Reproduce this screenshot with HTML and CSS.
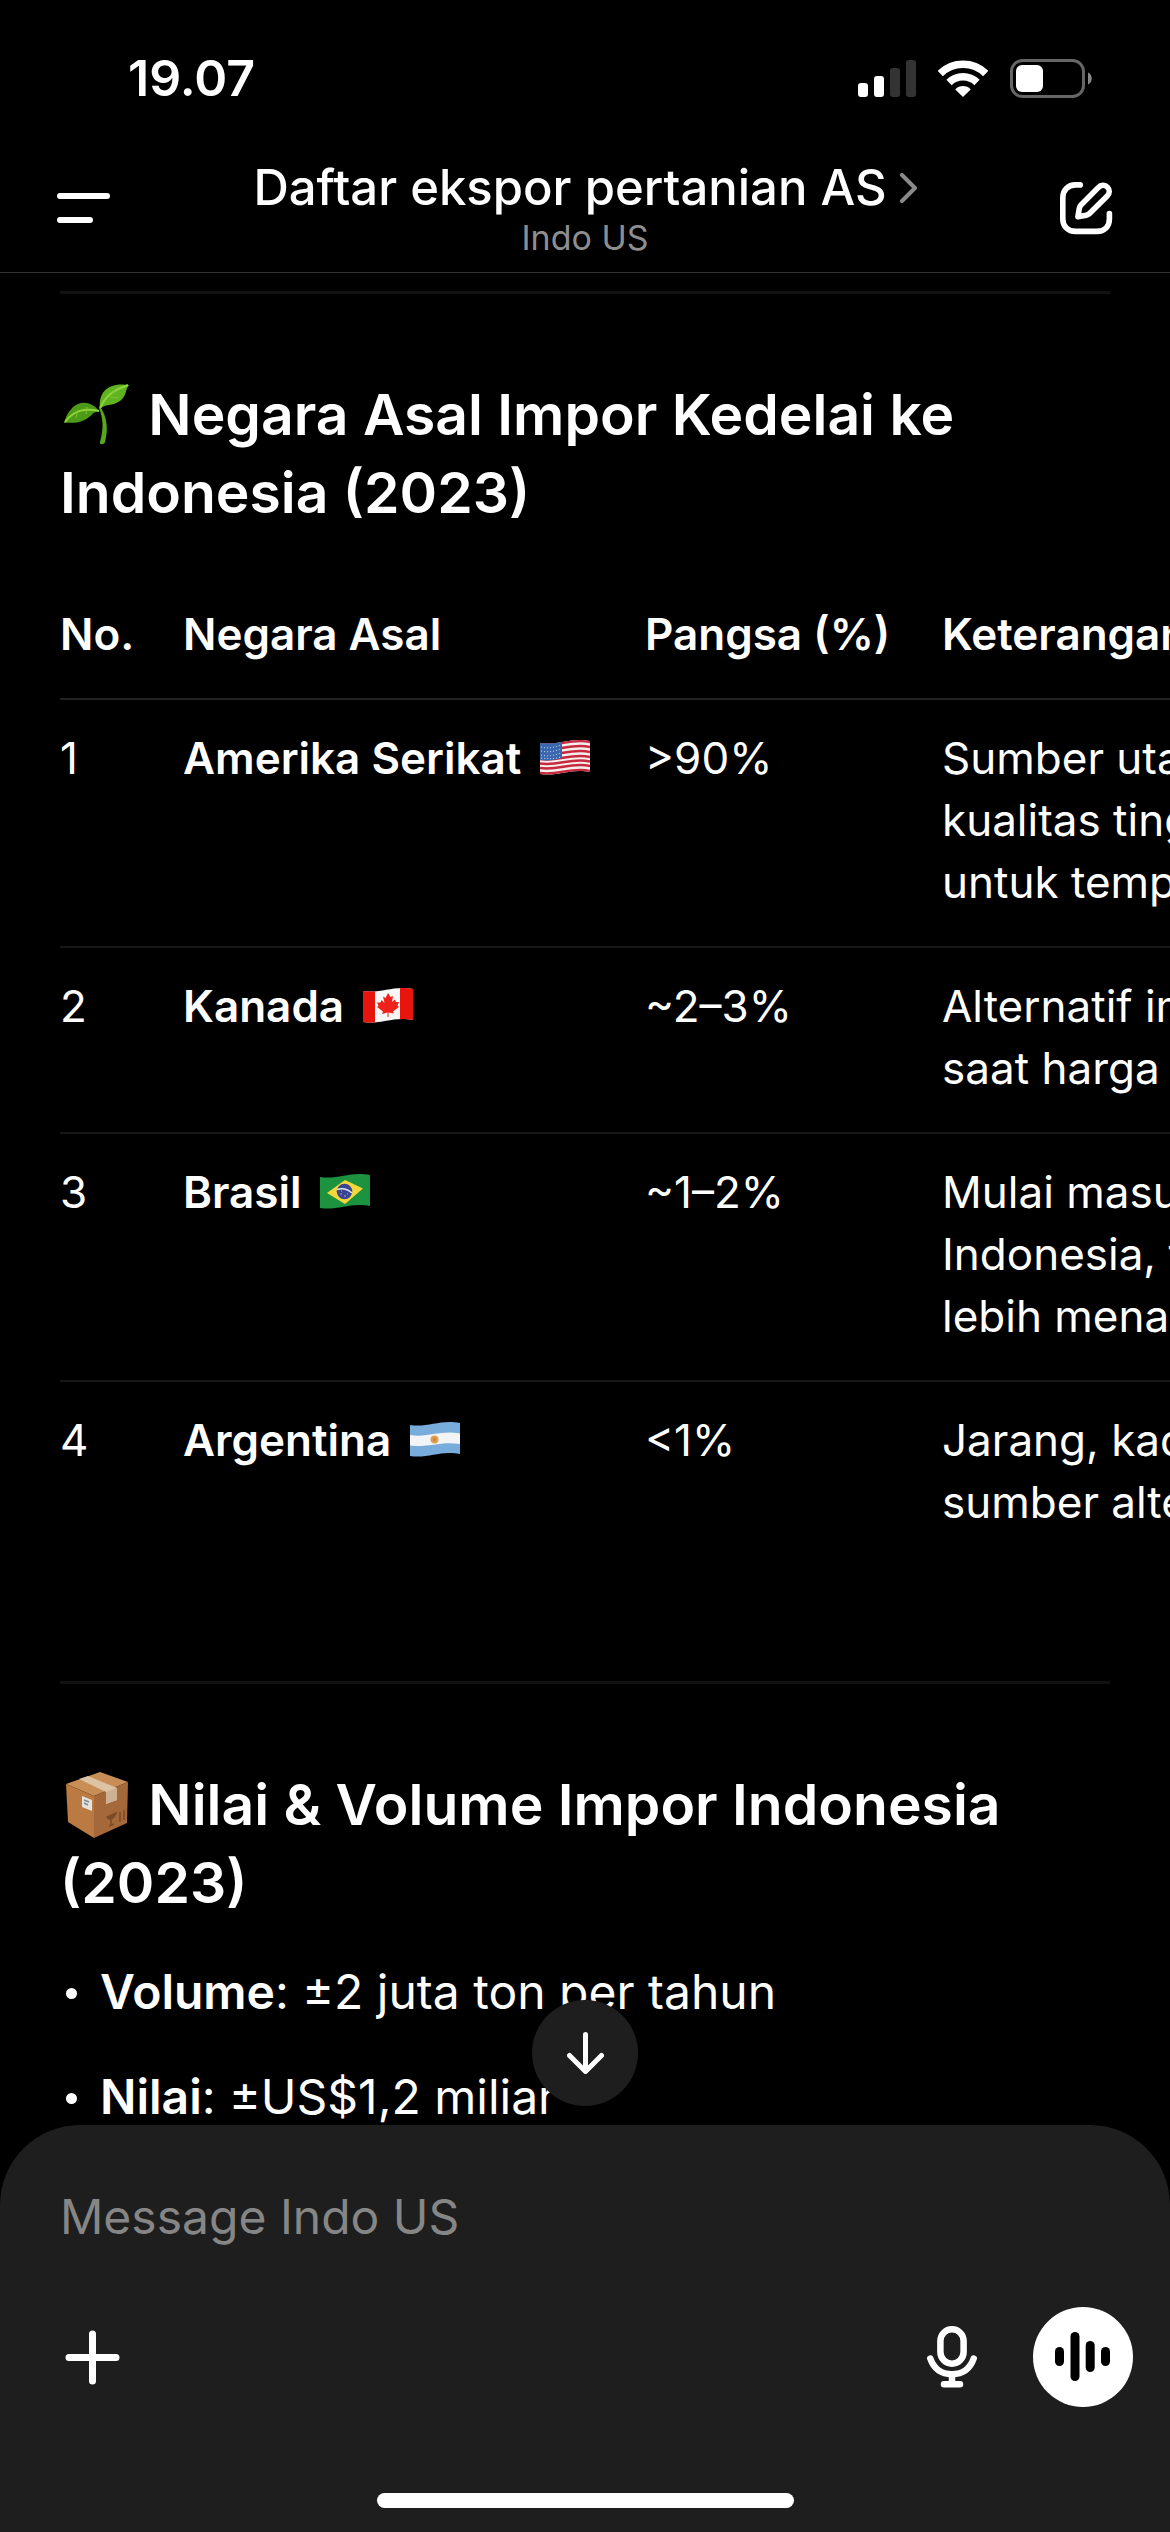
FILE: index.html
```html
<!DOCTYPE html>
<html lang="id">
<head>
  <meta charset="UTF-8">
  <meta name="viewport" content="width=device-width, initial-scale=1.0">
  <title>Daftar ekspor pertanian AS</title>
  <link rel="stylesheet" href="styles.css">
</head>
<body>
  <!-- Header -->
  <header class="header">
    <div class="status-bar">
      <span class="time">19.07</span>
      <div class="status-icons">
        <svg width="58" height="37" viewBox="0 0 58 37" fill="#fff">
          <rect x="0" y="23" width="10" height="14" rx="3"/>
          <rect x="16" y="16" width="10" height="21" rx="3"/>
          <rect x="32" y="8" width="10" height="29" rx="3" fill="#333"/>
          <rect x="48" y="0" width="10" height="37" rx="3" fill="#333"/>
        </svg>
        <svg width="50" height="37" viewBox="0 0 50 37" fill="none" stroke="#fff" stroke-width="7.6">
          <path d="M2.2 13.6A32.5 32.5 0 0 1 47.8 13.6"/>
          <path d="M11 22.5A20 20 0 0 1 39 22.5"/>
          <path d="M25 37L17.3 29.4C21.5 25 28.5 25 32.7 29.4Z" fill="#fff" stroke="none"/>
        </svg>
        <svg width="82" height="39" viewBox="0 0 82 39">
          <rect x="1.5" y="1.5" width="72" height="36" rx="11" fill="none" stroke="#666" stroke-width="3"/>
          <rect x="6" y="6" width="27" height="27" rx="6" fill="#fff"/>
          <path d="M78 13.5C83 15.5 83 23.5 78 25.5Z" fill="#888"/>
        </svg>
      </div>
    </div>

    <div class="nav">
      <button class="icon-btn" type="button" aria-label="Menu">
        <svg width="53" height="32" viewBox="0 0 53 32" stroke="#fff" stroke-width="6" stroke-linecap="round">
          <path d="M3 4H50M3 28H33"/>
        </svg>
      </button>
      <div class="nav-title">
        <h1>
          <a href="#">Daftar ekspor pertanian AS
            <svg width="18" height="30" viewBox="0 0 18 30" fill="none" stroke="#8a8a8a" stroke-width="4" stroke-linecap="round" stroke-linejoin="round">
              <path d="M3 2L16 15L3 28"/>
            </svg>
          </a>
        </h1>
        <p>Indo US</p>
      </div>
      <button class="icon-btn" type="button" aria-label="New chat">
        <svg width="53" height="53" viewBox="0 0 53 53" fill="none" stroke="#fff" stroke-width="5.6" stroke-linecap="round" stroke-linejoin="round">
          <path d="M20.2 2.9H15.5C8 2.9 2.8 8 2.8 15.5V37C2.8 44.5 8 49.4 15.5 49.4H37C44.5 49.4 49.4 44.5 49.4 37V31.5"/>
          <path d="M17.9 34.7L19.3 26.5C19.6 25 20 24 21 23L38.2 5.6C41 2.6 45 2.6 47.4 5.1S49.9 11.4 47.2 14L29.8 31.3C28.8 32.3 27.7 33 26.3 33.2Z"/>
        </svg>
      </button>
    </div>
  </header>

  <!-- Chat content -->
  <main class="chat">
    <hr>
    <h2>
      <svg class="emoji" width="74" height="70" viewBox="0 0 74 70">
        <path d="M39 27C43 37 44 47 40 61C39 64 44 64 45 61C49 46 46 35 41 27Z" fill="#57a81c"/>
        <path d="M39 30C28 16 10 20 4 42C10 41 14 43 22 40C31 37 33 30 39 30Z" fill="#4c9a16"/>
        <path d="M40 28C38 10 49 1 69 4C65 8 67 15 60 20C53 25 44 23 40 28Z" fill="#5fb320"/>
        <path d="M5 41C14 29 25 27 39 30M40 27C46 14 54 9 68 4" fill="none" stroke="#8fd43a" stroke-width="2"/>
        <path d="M18 29L16 37M27 26L26 33M50 16L58 17M55 9L51 14" stroke="#7cc62f" stroke-width="1"/>
      </svg>
      Negara Asal Impor Kedelai ke Indonesia (2023)
    </h2>

    <div class="table-scroll">
      <table>
        <thead>
          <tr>
            <th class="col-no">No.</th>
            <th class="col-country">Negara Asal</th>
            <th class="col-share">Pangsa (%)</th>
            <th class="col-note">Keterangan</th>
          </tr>
        </thead>
        <tbody>
          <tr>
            <td>1</td>
            <td>
              <strong>Amerika Serikat</strong>
              <svg class="flag" width="50" height="36" viewBox="0 0 50 36">
                <clipPath id="wave"><path d="M0 4C18 7 30-2 50 2V33C30 29 18 38 0 35Z"/></clipPath>
                <g clip-path="url(#wave)">
                  <rect width="50" height="36" fill="#f4eeee"/>
                  <g fill="none" stroke="#c8293c" stroke-width="2.5">
                    <path d="M0 5C18 8 30-1 50 3M0 10C18 13 30 4 50 8M0 15C18 18 30 9 50 13M0 20C18 23 30 14 50 18M0 24.5C18 27.5 30 18.5 50 22.5M0 29C18 32 30 23 50 27M0 34C18 37 30 28 50 32"/>
                  </g>
                  <path d="M0 3C9 5 15 4 22 2V19C15 21 9 22 0 21Z" fill="#3a67ad"/>
                  <path d="M1 8C9 10 15 8 21 6M1 12C9 14 15 12 21 10M1 16C9 18 15 16 21 14M1 19C9 20 15 20 21 18" fill="none" stroke="#c9d7ee" stroke-width="1" stroke-dasharray="1 2"/>
                </g>
              </svg>
            </td>
            <td>&gt;90%</td>
            <td>Sumber utama,<br>kualitas tinggi<br>untuk tempe</td>
          </tr>
          <tr>
            <td>2</td>
            <td>
              <strong>Kanada</strong>
              <svg class="flag" width="50" height="36" viewBox="0 0 50 36">
                <g clip-path="url(#wave)">
                  <rect width="50" height="36" fill="#f7f7f7"/>
                  <rect width="12" height="36" fill="#e8150f"/>
                  <rect x="37" width="13" height="36" fill="#e8150f"/>
                  <path d="M25 6L27.5 10L30 9L29 15L32 12.5L33 15L36 15L34.5 18.5L36 20L30 24.5L31 26.5L25.5 25.5V30H24.5V25.5L19 27L20 24.5L14 20L15.5 19L14 15.5L17.5 15.5L18.5 13L21.5 16L20 9.5L22.5 11Z" fill="#f0211b"/>
                </g>
              </svg>
            </td>
            <td>~2–3%</td>
            <td>Alternatif impor<br>saat harga naik</td>
          </tr>
          <tr>
            <td>3</td>
            <td>
              <strong>Brasil</strong>
              <svg class="flag" width="50" height="36" viewBox="0 0 50 36">
                <g clip-path="url(#wave)">
                  <rect width="50" height="36" fill="#1d9340"/>
                  <path d="M7 20L25 7L43 15.5L25 31Z" fill="#f5d73a"/>
                  <circle cx="24.5" cy="18.5" r="7.8" fill="#3a4494"/>
                  <path d="M17 16.5C22 15 28 16.5 32 20" fill="none" stroke="#dfe9f2" stroke-width="1.5"/>
                  <path d="M20 21H22M24 23H26M27 21H28M21 18H22" stroke="#9ba4d0" stroke-width="1"/>
                </g>
              </svg>
            </td>
            <td>~1–2%</td>
            <td>Mulai masuk<br>Indonesia, tetapi<br>lebih menarik</td>
          </tr>
          <tr>
            <td>4</td>
            <td>
              <strong>Argentina</strong>
              <svg class="flag" width="50" height="36" viewBox="0 0 50 36">
                <g clip-path="url(#wave)">
                  <rect width="50" height="36" fill="#78acdb"/>
                  <path d="M0 14C18 17 30 9 50 12.5V23C30 20 18 27 0 24.5Z" fill="#f2f4f7"/>
                  <circle cx="24.5" cy="18.5" r="4" fill="#e0a152"/>
                  <circle cx="24.5" cy="18.5" r="2" fill="#cf8a3b"/>
                </g>
              </svg>
            </td>
            <td>&lt;1%</td>
            <td>Jarang, kadang<br>sumber alternatif</td>
          </tr>
        </tbody>
      </table>
    </div>

    <hr>
    <h2>
      <svg class="emoji" width="74" height="70" viewBox="0 0 74 70">
        <path d="M6 13L40 1L68 11L34 25Z" fill="#c98d56"/>
        <path d="M6 13L34 25V67L8 51Z" fill="#ba7a42"/>
        <path d="M34 25L68 11L67 52L34 67Z" fill="#a5683a"/>
        <path d="M19 8L28 5L57 17V29L46 33V21Z" fill="#dcc3a3"/>
        <path d="M46 21L57 17V29L46 33Z" fill="#cdb192"/>
        <path d="M22 25L32 29V40L22 36Z" fill="#e6e3df"/>
        <path d="M24 29L29 31M24 32L28 34" stroke="#7d8b96" stroke-width="1.5"/>
        <path d="M47 46C49 50 54 48 56 42ZM51 48V54M49 55L54 53M60 41V51M64 39V49" fill="#7d4a27" stroke="#7d4a27" stroke-width="1.5"/>
      </svg>
      Nilai &amp; Volume Impor Indonesia (2023)
    </h2>
    <ul>
      <li><strong>Volume</strong>: ±2 juta ton per tahun</li>
      <li><strong>Nilai</strong>: ±US$1,2 miliar</li>
    </ul>
  </main>

  <!-- Message box -->
  <footer class="composer">
    <button class="scroll-btn" type="button" aria-label="Scroll down">
      <svg width="37" height="42" viewBox="0 0 37 42" fill="none" stroke="#fff" stroke-width="5" stroke-linecap="round" stroke-linejoin="round">
        <path d="M18.5 2.5V39M2.5 23.5L18.5 39.5L34.5 23.5"/>
      </svg>
    </button>
    <input class="message" type="text" placeholder="Message Indo US" aria-label="Message Indo US">
    <div class="toolbar">
      <button class="icon-btn add-btn" type="button" aria-label="Add">
        <svg width="55" height="55" viewBox="0 0 55 55" stroke="#fff" stroke-width="7" stroke-linecap="round">
          <path d="M27.5 4V51M4 27.5H51"/>
        </svg>
      </button>
      <button class="icon-btn" type="button" aria-label="Dictate">
        <svg width="50" height="62" viewBox="0 0 50 62" fill="none" stroke="#fff" stroke-width="6.5" stroke-linecap="round">
          <rect x="13.4" y="3.3" width="23.2" height="34.4" rx="11.6"/>
          <path d="M3.3 32.5C7 43 15 48.2 25 48.2S43 43 46.7 32.5M25 48.2V58M17 58.2H33"/>
        </svg>
      </button>
      <button class="voice-btn" type="button" aria-label="Voice mode">
        <svg width="56" height="50" viewBox="0 0 56 50" fill="#000">
          <rect x="0" y="15" width="9" height="19" rx="4.5"/>
          <rect x="15.5" y="0" width="9" height="49" rx="4.5"/>
          <rect x="30.7" y="9" width="9" height="31" rx="4.5"/>
          <rect x="46" y="15" width="9" height="19" rx="4.5"/>
        </svg>
      </button>
    </div>
    <div class="home-indicator"></div>
  </footer>
</body>
</html>
```
FILE: styles.css
```css
* {
  margin: 0;
  padding: 0;
  box-sizing: border-box;
}

body {
  display: flex;
  flex-direction: column;
  height: 100vh;
  background-color: #000;
  color: #fff;
  font-family: Inter, "Liberation Sans", sans-serif;
  font-size: 48px;
  line-height: 60px;
  overflow: hidden;
}

button {
  border: none;
  background: none;
  cursor: pointer;
}

svg {
  display: block;
  flex-shrink: 0;
}

strong {
  font-weight: 600;
}

/* Header */
.header {
  border-bottom: 1px solid #333;
}

.status-bar {
  display: flex;
  justify-content: space-between;
  align-items: center;
  padding: 48px 78px 0 128px;
}

.time {
  font-size: 50px;
  font-weight: 600;
}

.status-icons {
  display: flex;
  align-items: center;
  gap: 22px;
}

.nav {
  display: flex;
  justify-content: space-between;
  align-items: center;
  padding: 50px 57px 14px;
}

.nav-title {
  text-align: center;
}

.nav-title h1 {
  font-size: 49px;
  font-weight: 500;
}

.nav-title a {
  display: flex;
  align-items: center;
  gap: 12px;
  color: #fff;
  text-decoration: none;
}

.nav-title p {
  color: #8e8e8e;
  font-size: 34px;
  line-height: 40px;
}

/* Chat content */
.chat {
  flex: 1;
  min-height: 0;
  padding: 18px 60px 0;
  overflow: hidden;
}

hr {
  height: 3px;
  border: none;
  background-color: #111;
}

h2 {
  margin-top: 82px;
  font-size: 57px;
  font-weight: 600;
  line-height: 78px;
}

.emoji {
  display: inline-block;
  vertical-align: -16px;
}

.table-scroll {
  margin: 44px -60px 115px 0;
  overflow: hidden;
}

table {
  width: 1340px;
  table-layout: fixed;
  border-collapse: collapse;
  font-size: 44px;
  line-height: 62px;
  text-align: left;
}

th,
td {
  padding: 27px 0 33px;
  vertical-align: top;
  white-space: nowrap;
}

th {
  border-bottom: 2px solid #222;
  font-weight: 600;
}

td {
  border-bottom: 2px solid #161616;
}

tr:last-child td {
  border-bottom: none;
}

.col-no {
  width: 123px;
}

.col-country {
  width: 462px;
}

.col-share {
  width: 297px;
}

.flag {
  display: inline-block;
  margin-left: 6px;
  vertical-align: -1px;
}

ul {
  margin-top: 40px;
  list-style: none;
}

li {
  display: block;
  margin-bottom: 45px;
}

li::before {
  content: "";
  display: inline-block;
  width: 11px;
  height: 11px;
  margin: 0 23px 0 6px;
  border-radius: 50%;
  background-color: #fff;
  vertical-align: 10px;
}

/* Message box */
.composer {
  position: relative;
  padding: 61px 60px 24px;
  border-radius: 80px 80px 0 0;
  background-color: #1e1e1e;
}

.scroll-btn {
  position: absolute;
  top: -125px;
  left: 50%;
  display: flex;
  justify-content: center;
  align-items: center;
  width: 106px;
  height: 106px;
  margin-left: -53px;
  border-radius: 50%;
  background-color: #1e1e1e;
}

.message {
  display: block;
  width: 100%;
  height: 60px;
  border: none;
  outline: none;
  background: none;
  color: #fff;
  font-family: inherit;
  font-size: 48px;
}

.message::placeholder {
  color: #868686;
}

.toolbar {
  display: flex;
  align-items: center;
  gap: 56px;
  margin: 61px -23px 0 0;
}

.add-btn {
  margin: 0 auto 0 5px;
}

.voice-btn {
  display: flex;
  justify-content: center;
  align-items: center;
  width: 100px;
  height: 100px;
  border-radius: 50%;
  background-color: #fff;
}

.home-indicator {
  width: 417px;
  height: 15px;
  margin: 86px auto 0;
  border-radius: 8px;
  background-color: #fff;
}
```
